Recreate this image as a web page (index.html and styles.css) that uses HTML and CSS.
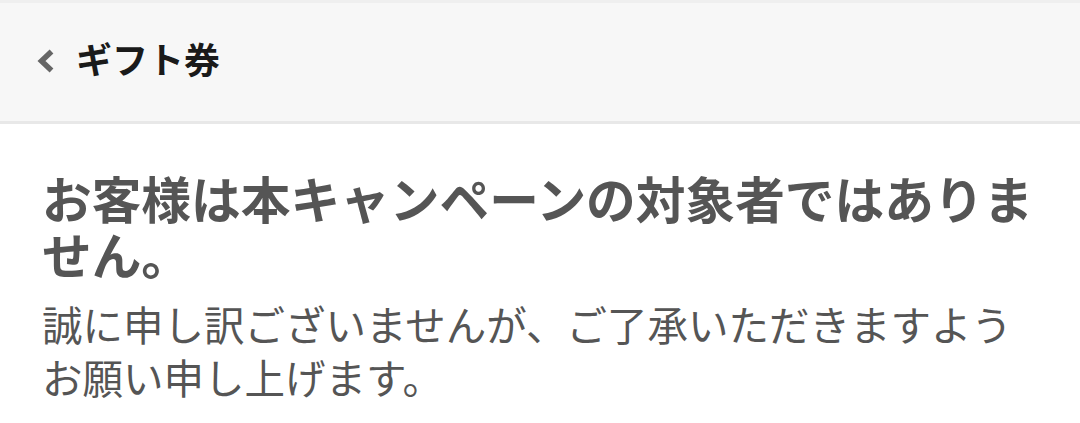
FILE: index.html
```html
<!DOCTYPE html>
<html lang="ja">
<head>
<meta charset="utf-8">
<link rel="stylesheet" href="styles.css">
</head>
<body>
<header class="bar">
  <span class="back" aria-label="戻る">
    <svg width="20" height="26" viewBox="0 0 20 26"><path d="M15.5 3.5 L5.5 13 L15.5 22.5" fill="none" stroke="#666" stroke-width="5.5" stroke-linecap="butt" stroke-linejoin="miter"/></svg>
  </span>
  <h1 class="bar-title">ギフト券</h1>
</header>
<main class="content">
  <h2 class="headline">お客様は本キャンペーンの対象者ではありません。</h2>
  <p class="message">誠に申し訳ございませんが、ご了承いただきますようお願い申し上げます。</p>
</main>
</body>
</html>
```
FILE: styles.css
```css
html, body {
  margin: 0;
  padding: 0;
  background: #ffffff;
  font-family: "Noto Sans CJK JP", "Noto Sans", sans-serif;
}
.bar {
  height: 118px;
  background: #f7f7f7;
  border-top: 3px solid #efefef;
  border-bottom: 3px solid #e8e8e8;
  display: flex;
  align-items: center;
  padding-left: 36px;
  gap: 20px;
}
.back {
  display: flex;
  align-items: center;
  margin-top: -2px;
}
.bar-title {
  margin: 0 0 8px 0;
  font-size: 36px;
  font-weight: 700;
  color: #1a1a1a;
  line-height: 1;
}
.content {
  padding: 45px 42px 0 42px;
}
.headline {
  margin: 0;
  font-size: 49.7px;
  font-weight: 700;
  color: #555555;
  line-height: 56px;
}
.message {
  margin: 16px 0 0 0;
  font-size: 40.5px;
  font-weight: 400;
  color: #555555;
  line-height: 53px;
}
```
